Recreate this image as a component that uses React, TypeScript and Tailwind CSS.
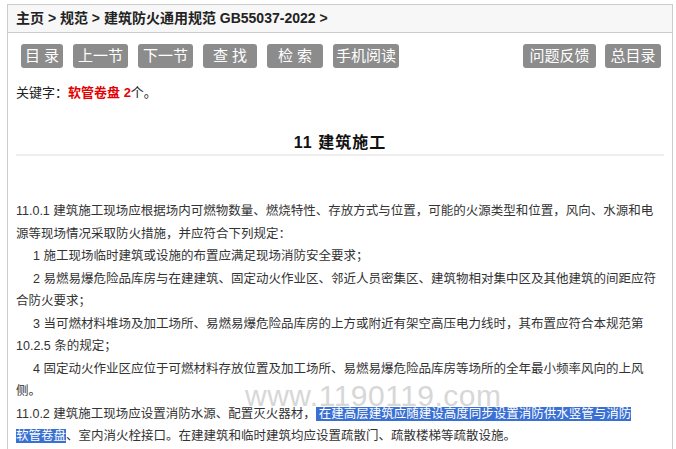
const buttonsLeft = [
  { label: "目录", w: "w-[42px]", spaced: true },
  { label: "上一节", w: "w-[55px]", spaced: false },
  { label: "下一节", w: "w-[55px]", spaced: false },
  { label: "查找", w: "w-[54px]", spaced: true },
  { label: "检索", w: "w-[56px]", spaced: true },
  { label: "手机阅读", w: "w-[66px]", spaced: false },
];

const buttonsRight = [
  { label: "问题反馈", w: "w-[73px]" },
  { label: "总目录", w: "w-[56px]" },
];

const font = "font-['Liberation_Sans','Noto_Sans_CJK_SC',sans-serif]";

export default function App() {
  return (
    <div className={`bg-white w-[676px] h-[449px] overflow-hidden pt-[4px] pl-[7px] ${font}`}>
      <div className="w-[666px] min-h-[460px] border border-[#cccccc] relative">
        {/* Breadcrumb */}
        <div className="h-[28px] bg-[#f7f7f7] border-b border-[#cccccc] flex items-center pl-[8px] text-[14px] font-bold text-[#222]">
          主页 &gt; 规范 &gt; 建筑防火通用规范 GB55037-2022 &gt;
        </div>

        {/* Toolbar */}
        <div className="flex justify-between pt-[11px] pl-[13px] pr-[11px]">
          <div className="flex gap-[10px]">
            {buttonsLeft.map((b) => (
              <div
                key={b.label}
                className={`${b.w} h-[24px] rounded-[3px] bg-[#8c8c8c] text-white text-[15px] flex items-center justify-center ${
                  b.spaced ? "tracking-[4px] pl-[4px]" : ""
                }`}
              >
                {b.label}
              </div>
            ))}
          </div>
          <div className="flex gap-[9px]">
            {buttonsRight.map((b) => (
              <div
                key={b.label}
                className={`${b.w} h-[24px] rounded-[3px] bg-[#8c8c8c] text-white text-[15px] flex items-center justify-center`}
              >
                {b.label}
              </div>
            ))}
          </div>
        </div>

        {/* Keyword */}
        <div className="pl-[8px] mt-[16px] text-[13px] leading-[18px] text-[#222]">
          关键字：<span className="text-[#e60000] font-bold">软管卷盘 2</span>个。
        </div>

        {/* Title */}
        <div className="mx-[8px] mt-[31px] pb-[1px] border-b-2 border-[#eeeeee] text-center text-[16px] font-bold leading-[20px] tracking-[1px] text-[#111]">
          11 建筑施工
        </div>

        {/* Body */}
        <div className="relative px-[8px] mt-[44px] text-[12.5px] leading-[22.5px] text-[#333]">
          <div className="absolute left-[237px] top-[181px] text-[30px] leading-[30px] tracking-[0.5px] text-[#bdbdbd] opacity-60 font-['Liberation_Sans',sans-serif] pointer-events-none">
            www.1190119.com
          </div>
          <div className="relative">
            <p>
              11.0.1 建筑施工现场应根据场内可燃物数量、燃烧特性、存放方式与位置，可能的火源类型和位置，风向、水源和电源等现场情况采取防火措施，并应符合下列规定：
            </p>
            <p className="indent-[17px]">1 施工现场临时建筑或设施的布置应满足现场消防安全要求；</p>
            <p className="indent-[17px]">
              2 易燃易爆危险品库房与在建建筑、固定动火作业区、邻近人员密集区、建筑物相对集中区及其他建筑的间距应符合防火要求；
            </p>
            <p className="indent-[17px]">
              3 当可燃材料堆场及加工场所、易燃易爆危险品库房的上方或附近有架空高压电力线时，其布置应符合本规范第 10.2.5 条的规定；
            </p>
            <p className="indent-[17px]">
              4 固定动火作业区应位于可燃材料存放位置及加工场所、易燃易爆危险品库房等场所的全年最小频率风向的上风侧。
            </p>
            <p>
              11.0.2 建筑施工现场应设置消防水源、配置灭火器材，
              <span className="bg-[#3a70d3] text-white pl-[3px]">
                在建高层建筑应随建设高度同步设置消防供水竖管与消防
                <br />
                软管卷盘
              </span>
              、室内消火栓接口。在建建筑和临时建筑均应设置疏散门、疏散楼梯等疏散设施。
            </p>
          </div>
        </div>
      </div>
    </div>
  );
}
